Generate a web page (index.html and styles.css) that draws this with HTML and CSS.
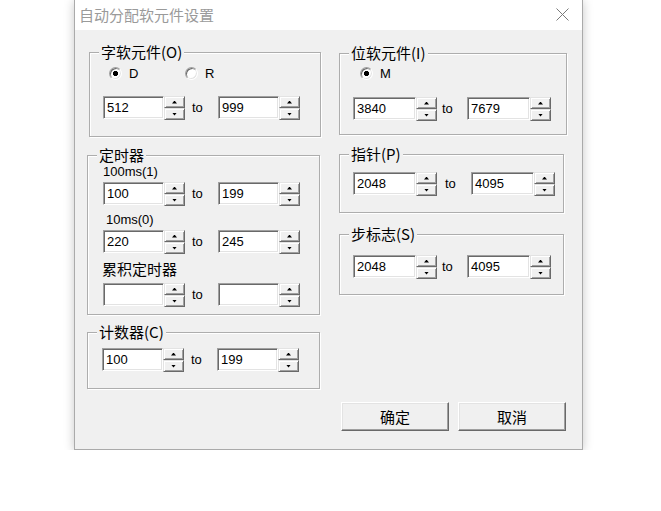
FILE: index.html
```html
<!DOCTYPE html>
<html lang="zh">
<head>
<meta charset="utf-8">
<title>自动分配软元件设置</title>
<link rel="stylesheet" href="styles.css">
</head>
<body>
<div class="window">
  <div class="titlebar">
    <span class="title">自动分配软元件设置</span>
    <svg class="close" width="13" height="13" viewBox="0 0 13 13"><path d="M0.5 0.5L12.5 12.5M12.5 0.5L0.5 12.5" stroke="#7a7a7a" stroke-width="1" fill="none"/></svg>
  </div>
  <div class="client">
    <div class="col left">
      <div class="group g1">
        <div class="legend">字软元件(O)</div>
        <div class="radios">
          <span class="radio checked">D</span>
          <span class="radio">R</span>
        </div>
        <div class="range">
          <div class="field"><span class="edit">512</span><span class="spin"><i class="up"></i><i class="down"></i></span></div>
          <span class="to">to</span>
          <div class="field"><span class="edit">999</span><span class="spin"><i class="up"></i><i class="down"></i></span></div>
        </div>
      </div>
      <div class="group g3">
        <div class="legend">定时器</div>
        <div class="sub sub1">100ms(1)</div>
        <div class="range">
          <div class="field"><span class="edit">100</span><span class="spin"><i class="up"></i><i class="down"></i></span></div>
          <span class="to">to</span>
          <div class="field"><span class="edit">199</span><span class="spin"><i class="up"></i><i class="down"></i></span></div>
        </div>
        <div class="sub sub2">10ms(0)</div>
        <div class="range">
          <div class="field"><span class="edit">220</span><span class="spin"><i class="up"></i><i class="down"></i></span></div>
          <span class="to">to</span>
          <div class="field"><span class="edit">245</span><span class="spin"><i class="up"></i><i class="down"></i></span></div>
        </div>
        <div class="sub sub3">累积定时器</div>
        <div class="range">
          <div class="field"><span class="edit"></span><span class="spin"><i class="up"></i><i class="down"></i></span></div>
          <span class="to">to</span>
          <div class="field"><span class="edit"></span><span class="spin"><i class="up"></i><i class="down"></i></span></div>
        </div>
      </div>
      <div class="group g4">
        <div class="legend">计数器(C)</div>
        <div class="range">
          <div class="field"><span class="edit">100</span><span class="spin"><i class="up"></i><i class="down"></i></span></div>
          <span class="to">to</span>
          <div class="field"><span class="edit">199</span><span class="spin"><i class="up"></i><i class="down"></i></span></div>
        </div>
      </div>
    </div>
    <div class="col right">
      <div class="group g2">
        <div class="legend">位软元件(I)</div>
        <div class="radios">
          <span class="radio checked">M</span>
        </div>
        <div class="range r">
          <div class="field"><span class="edit">3840</span><span class="spin"><i class="up"></i><i class="down"></i></span></div>
          <span class="to">to</span>
          <div class="field"><span class="edit">7679</span><span class="spin"><i class="up"></i><i class="down"></i></span></div>
        </div>
      </div>
      <div class="group g5">
        <div class="legend">指针(P)</div>
        <div class="range r p">
          <div class="field"><span class="edit">2048</span><span class="spin"><i class="up"></i><i class="down"></i></span></div>
          <span class="to">to</span>
          <div class="field"><span class="edit">4095</span><span class="spin"><i class="up"></i><i class="down"></i></span></div>
        </div>
      </div>
      <div class="group g6">
        <div class="legend">步标志(S)</div>
        <div class="range r">
          <div class="field"><span class="edit">2048</span><span class="spin"><i class="up"></i><i class="down"></i></span></div>
          <span class="to">to</span>
          <div class="field"><span class="edit">4095</span><span class="spin"><i class="up"></i><i class="down"></i></span></div>
        </div>
      </div>
      <div class="buttons">
        <span class="btn">确定</span>
        <span class="btn">取消</span>
      </div>
    </div>
  </div>
</div>
</body>
</html>
```
FILE: styles.css
```css
body {
  margin: 0;
  background: #fff;
  font-family: "Liberation Sans", "Noto Sans CJK SC", sans-serif;
  font-size: 13px;
  color: #000;
}

.window {
  margin-left: 74px;
  width: 509px;
  height: 450px;
  box-sizing: border-box;
  border: 1px solid #aaaaaa;
  border-top: 0;
  background: #f0f0f0;
  box-shadow: 0 1px 10px rgba(0, 0, 0, 0.22);
  display: flex;
  flex-direction: column;
}

.titlebar {
  height: 30px;
  flex: none;
  background: #fff;
  display: flex;
  align-items: center;
  justify-content: space-between;
  padding: 0 13px 0 4px;
}

.title {
  font-family: "Noto Sans CJK SC", sans-serif;
  font-size: 15px;
  line-height: 20px;
  color: #9a9a9a;
}

.close {
  display: block;
  margin-top: -2px;
}

.client {
  flex: 1;
  display: flex;
  padding-left: 12px;
}

.col {
  display: flex;
  flex-direction: column;
}

.left { width: 233px; }
.right { width: 228px; margin-left: 19px; }

.group {
  box-sizing: border-box;
  border: 1px solid #adadad;
  box-shadow: inset 1px 1px #fff, 1px 1px #fff;
}

.legend {
  width: max-content;
  height: 20px;
  line-height: 20px;
  margin: -11px 0 0 9px;
  padding: 0 2px;
  background: #f0f0f0;
  font-family: "Noto Sans CJK SC", sans-serif;
  font-size: 15px;
}

.g1 { margin: 22px 0 0 2px; width: 232px; height: 85px; }
.g3 { margin-top: 18px; width: 233px; height: 160px; }
.g4 { margin-top: 17px; width: 233px; height: 57px; }
.g2 { margin-top: 23px; width: 228px; height: 82px; }
.g5 { margin-top: 19px; width: 225px; height: 59px; }
.g6 { margin-top: 21px; width: 225px; height: 61px; }

.radios {
  display: flex;
  height: 13px;
  margin-top: 5px;
  padding-left: 19px;
}

.g2 .radios { margin-top: 4px; padding-left: 20px; }

.radio {
  display: flex;
  align-items: center;
  gap: 7px;
  width: 76px;
  height: 13px;
  line-height: 13px;
}

.radio::before {
  content: "";
  flex: none;
  width: 13px;
  height: 13px;
  box-sizing: border-box;
  border-radius: 50%;
  border: 1px solid;
  border-color: #a0a0a0 #ffffff #ffffff #a0a0a0;
  box-shadow: inset 1px 1px #696969, inset -1px -1px #e3e3e3;
  background: #fff;
}

.radio.checked::before {
  background: radial-gradient(circle, #000 0 2.3px, #fff 2.9px);
}

.range {
  display: flex;
  align-items: flex-start;
  height: 24px;
  padding-left: 13px;
}

.g1 .range { margin-top: 16px; }
.g3 .range { padding-left: 15px; margin-top: 3px; }
.g3 .range:last-child { margin-top: 5px; }
.g4 .range { padding-left: 14px; margin-top: 6px; }
.g2 .range { margin-top: 17px; }
.g5 .range { margin-top: 8px; }
.g6 .range { margin-top: 11px; }

.field {
  display: flex;
  align-items: flex-start;
}

.edit {
  width: 61px;
  height: 23px;
  box-sizing: border-box;
  background: #fff;
  border: 1px solid;
  border-color: #a0a0a0 #ffffff #ffffff #a0a0a0;
  box-shadow: inset 1px 1px #696969, inset -1px -1px #e3e3e3;
  padding-left: 3px;
  line-height: 21px;
}

.r .edit { width: 63px; }

.spin {
  width: 21px;
  height: 24px;
  display: flex;
  flex-direction: column;
}

.spin i {
  flex: 1;
  box-sizing: border-box;
  border: 1px solid;
  border-color: #e3e3e3 #696969 #696969 #e3e3e3;
  box-shadow: inset 1px 1px #fff, inset -1px -1px #a0a0a0;
  background: #f0f0f0;
  display: flex;
  align-items: center;
  justify-content: center;
}

.spin i::after {
  content: "";
  width: 5px;
  height: 3px;
  background: #000;
}

.spin .up::after { clip-path: polygon(50% 0, 100% 100%, 0 100%); }
.spin .down::after { clip-path: polygon(0 0, 100% 0, 50% 100%); }

.to {
  margin-left: 7px;
  width: 26px;
  line-height: 24px;
}

.r .to { margin-left: 5px; width: 25px; }
.r.p .to { margin-left: 8px; width: 26px; }

.sub {
  height: 15px;
  line-height: 15px;
}

.sub1 { margin-top: -1px; padding-left: 15px; }
.sub2 { margin-top: 6px; padding-left: 18px; }
.sub3 {
  margin-top: 6px;
  padding-left: 14px;
  height: 18px;
  line-height: 18px;
  font-family: "Noto Sans CJK SC", sans-serif;
  font-size: 15px;
}

.buttons {
  display: flex;
  gap: 9px;
  margin: 107px 0 0 2px;
}

.btn {
  width: 108px;
  height: 29px;
  box-sizing: border-box;
  border: 1px solid;
  border-color: #ffffff #696969 #696969 #ffffff;
  box-shadow: inset -1px -1px #a0a0a0, inset 1px 1px #e3e3e3;
  background: #f0f0f0;
  display: flex;
  align-items: center;
  justify-content: center;
  font-family: "Noto Sans CJK SC", sans-serif;
  font-size: 15px;
}
```
